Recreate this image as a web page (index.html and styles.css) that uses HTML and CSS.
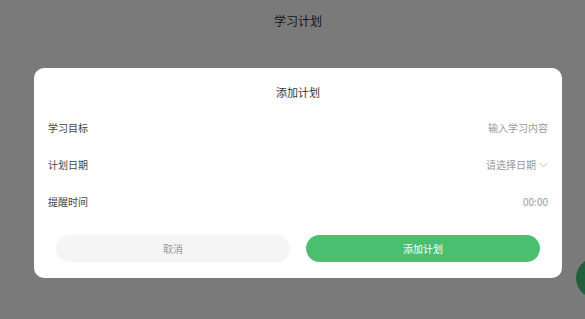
FILE: index.html
```html
<!DOCTYPE html>
<html lang="zh-CN">
<head>
  <meta charset="UTF-8" />
  <meta name="viewport" content="width=device-width, initial-scale=1.0"/>
  <title>学习计划</title>
  <link rel="stylesheet" href="styles.css">
</head>
<body>
  <div class="nav-bar">学习计划</div>

  <div class="fab"></div>

  <div class="mask">
    <div class="dialog">
      <div class="dialog-title">添加计划</div>

      <div class="form-row">
        <span class="form-label">学习目标</span>
        <span class="form-value">输入学习内容</span>
      </div>
      <div class="form-row">
        <span class="form-label">计划日期</span>
        <span class="form-value">请选择日期
          <svg class="chevron" viewBox="0 0 10 6" width="9" height="6">
            <path d="M0.8 0.8 L5 5 L9.2 0.8" fill="none" stroke="#b0b0b0" stroke-width="0.9"/>
          </svg>
        </span>
      </div>
      <div class="form-row">
        <span class="form-label">提醒时间</span>
        <span class="form-value">00:00</span>
      </div>

      <div class="dialog-actions">
        <button class="btn btn-cancel">取消</button>
        <button class="btn btn-confirm">添加计划</button>
      </div>
    </div>
  </div>
</body>
</html>
```

FILE: styles.css
```css
* {
  box-sizing: border-box;
}

body {
  margin: 0;
  background-color: #f5f5f5;
  font-family: "Noto Sans CJK SC", "Noto Sans", sans-serif;
  color: #333;
}

.nav-bar {
  height: 42px;
  line-height: 42px;
  padding-left: 11px;
  text-align: center;
  font-size: 12px;
  color: #333;
}

.fab {
  position: fixed;
  left: 576px;
  top: 258px;
  width: 40px;
  height: 40px;
  border-radius: 50%;
  background-color: #43bc74;
}

.mask {
  position: fixed;
  top: 0;
  left: 0;
  right: 0;
  bottom: 0;
  background-color: rgba(0, 0, 0, 0.5);
  padding: 68px 23px 0 34px;
}

.dialog {
  width: 528px;
  background: #ffffff;
  border-radius: 10px;
  padding: 14px 14px 16px;
}

.dialog-title {
  text-align: center;
  font-size: 11px;
  line-height: 20px;
  color: #333;
  margin-bottom: 7px;
}

.form-row {
  display: flex;
  justify-content: space-between;
  align-items: center;
  height: 37px;
  font-size: 10px;
}

.form-label {
  color: #444;
}

.form-value {
  color: #999;
  display: flex;
  align-items: center;
}

.chevron {
  margin-left: 3px;
}

.dialog-actions {
  display: flex;
  gap: 16px;
  padding: 0 8px;
  margin-top: 15px;
}

.btn {
  flex: 1;
  height: 27px;
  border: none;
  border-radius: 999px;
  font-family: inherit;
  font-size: 10px;
  cursor: pointer;
}

.btn-cancel {
  background-color: #f5f5f5;
  color: #999;
}

.btn-confirm {
  background-color: #4abf70;
  color: #ffffff;
}
```
